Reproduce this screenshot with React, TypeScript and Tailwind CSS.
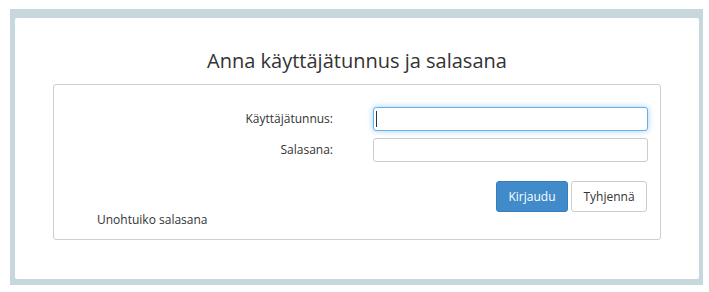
import React from 'react';

const font = { fontFamily: '"Open Sans", "Noto Sans", Arial, sans-serif' };

function Field({ label, focused }: { label: string; focused?: boolean }) {
  return (
    <div className="flex items-center h-[24px]">
      <label className="w-[279px] text-right text-[12px] font-medium text-[#333]">{label}</label>
      <div className="relative ml-[40px] w-[275px] h-[24px]">
        <input
          type={focused ? 'text' : 'password'}
          className={
            focused
              ? 'w-full h-full rounded-[3px] border border-[#66afe9] bg-white outline-none shadow-[0_0_6px_rgba(102,175,233,0.6)]'
              : 'w-full h-full rounded-[3px] border border-[#cccccc] bg-white outline-none'
          }
        />
        {focused && <span className="absolute left-[3px] top-[4px] h-[16px] w-px bg-[#333]" />}
      </div>
    </div>
  );
}

export default function App() {
  return (
    <div className="w-[709px] h-[292px] bg-white pt-[9px] pl-[10px] pr-[6px]" style={font}>
      <div className="h-[276px] bg-[#c6d7de] pt-[9px] pl-[5px] pr-[4px] pb-[6px]">
        <div className="h-full bg-white rounded-[2px] px-[38px] pt-[29px]">
          <h1 className="text-center text-[20px] leading-[28px] font-normal text-[#333]">
            Anna käyttäjätunnus ja salasana
          </h1>
          <div className="mt-[9px] h-[156px] rounded-[3px] border border-[#c8d0d6] pt-[22px]">
            <div className="flex flex-col gap-[7px]">
              <Field label="Käyttäjätunnus:" focused />
              <Field label="Salasana:" />
            </div>
            <div className="mt-[19px] flex justify-end gap-[3px] pr-[13px]">
              <button className="h-[31px] w-[72px] rounded-[3px] border border-[#357ebd] bg-[#428bca] text-[12px] font-medium text-white">
                Kirjaudu
              </button>
              <button className="h-[31px] w-[76px] rounded-[3px] border border-[#cccccc] bg-white text-[12px] font-medium text-[#333]">
                Tyhjennä
              </button>
            </div>
            <div className="pl-[43px] text-[12px] leading-[16px] font-medium text-[#333]">
              Unohtuiko salasana
            </div>
          </div>
        </div>
      </div>
    </div>
  );
}
